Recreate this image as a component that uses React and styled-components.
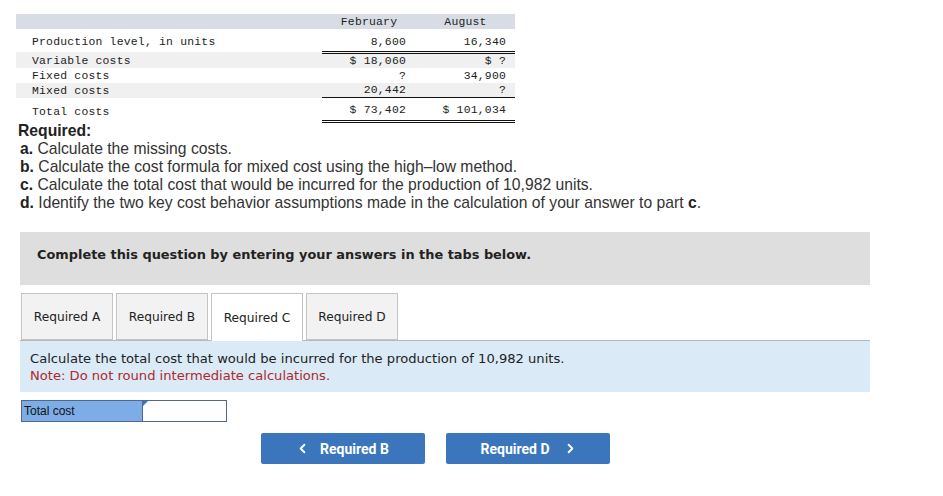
import React from "react";
import styled, { createGlobalStyle } from "styled-components";
import { ChevronLeft, ChevronRight } from "lucide-react";

const Global = createGlobalStyle`
  html, body { margin: 0; padding: 0; background: #fff; }
  body { font-family: "Liberation Sans", Arial, sans-serif; color: #222; }
`;

const Page = styled.div`
  width: 943px;
  height: 496px;
  overflow: hidden;
  padding-top: 14px;
  box-sizing: border-box;
`;

const DataTable = styled.table`
  margin-left: 16px;
  width: 499px;
  border-collapse: collapse;
  font-family: "Liberation Mono", "DejaVu Sans Mono", monospace;
  font-size: 11.4px;
  letter-spacing: 0.22px;
  color: #222;
`;

const HeadRow = styled.tr`
  background: #d8dde5;
  height: 15px;
`;

const Row = styled.tr`
  background: ${(p) => (p.$shade ? "#f0f0f0" : "#fff")};
  height: ${(p) => p.$h || 15}px;
`;

const Label = styled.td`
  padding: 0 0 ${(p) => p.$pb || 0}px 16px;
  width: 290px;
  vertical-align: bottom;
  line-height: 14px;
  white-space: nowrap;
`;

const HeadCell = styled.th`
  font-weight: normal;
  text-align: center;
  padding: 0;
  line-height: 14px;
  width: ${(p) => p.$w}px;
`;

const Num = styled.td`
  text-align: right;
  padding: 0 ${(p) => p.$pr}px ${(p) => p.$pb || 0}px 0;
  vertical-align: bottom;
  line-height: 14px;
  white-space: nowrap;
  border-bottom: ${(p) =>
    p.$line === "double" ? "3px double #111" : p.$line === "single" ? "1px solid #111" : "none"};
`;

const Required = styled.div`
  margin: -1px 0 0 18px;
  font-family: "Liberation Sans", Arial, sans-serif;
  font-size: 15.7px;
  line-height: 18px;
  color: #333;
`;

const ReqTitle = styled.div`
  font-weight: bold;
  color: #222;
`;

const ReqItem = styled.div`
  padding-left: 2px;
  b { font-weight: bold; color: #222; }
`;

const Instruction = styled.div`
  margin: 20px 0 0 20px;
  width: 850px;
  height: 53px;
  background: #dedede;
  padding: 15px 0 0 17px;
  box-sizing: border-box;
  font-family: "DejaVu Sans", Verdana, sans-serif;
  font-weight: bold;
  font-size: 12.9px;
  line-height: 16px;
  color: #222;
`;

const Tabs = styled.div`
  margin: 8px 0 0 20px;
  width: 850px;
  display: flex;
  gap: 3px;
  padding-left: 1px;
  box-sizing: border-box;
  border-bottom: 1px solid #b8b8b8;
  height: 48px;
`;

const Tab = styled.div`
  width: 92px;
  box-sizing: border-box;
  border: 1px solid #c4c4c4;
  border-bottom: ${(p) => (p.$active ? "none" : "1px solid #c4c4c4")};
  background: ${(p) => (p.$active ? "#fff" : "#f2f2f2")};
  height: ${(p) => (p.$active ? 48 : 47)}px;
  display: flex;
  align-items: center;
  justify-content: center;
  padding-top: 1px;
  font-family: "DejaVu Sans", Verdana, sans-serif;
  font-size: 12.2px;
  color: #222;
  position: relative;
  z-index: ${(p) => (p.$active ? 1 : 0)};
`;

const InfoBox = styled.div`
  margin-left: 20px;
  width: 850px;
  height: 51px;
  background: #dbeaf7;
  box-sizing: border-box;
  padding: 9px 0 0 10px;
  font-family: "DejaVu Sans", Verdana, sans-serif;
  font-size: 13.1px;
  line-height: 17px;
  color: #222;
`;

const Note = styled.div`
  color: #b0282a;
`;

const AnswerRow = styled.div`
  margin: 8px 0 0 21px;
  display: flex;
  width: 206px;
  height: 22px;
  border: 1px solid #51688a;
  box-sizing: border-box;
`;

const AnswerLabel = styled.div`
  width: 121px;
  box-sizing: border-box;
  background: #7cade6;
  border-right: 1px solid #51688a;
  display: flex;
  align-items: center;
  padding-left: 2px;
  font-family: "Liberation Sans", Arial, sans-serif;
  font-size: 12px;
  color: #111;
`;

const AnswerInput = styled.div`
  flex: 1;
  background: #fff;
  position: relative;
  &::before {
    content: "";
    position: absolute;
    left: 0;
    top: 0;
    border-left: 5px solid #3a78c0;
    border-bottom: 5px solid transparent;
  }
`;

const NavRow = styled.div`
  margin: 11px 0 0 261px;
  display: flex;
  gap: 21px;
`;

const NavButton = styled.div`
  width: 164px;
  height: 31px;
  background: #3b76bc;
  border-radius: 2px;
  display: flex;
  align-items: center;
  justify-content: center;
  gap: ${(p) => (p.$next ? 13 : 10)}px;
  color: #fff;
  font-family: Roboto, "Liberation Sans", sans-serif;
  font-weight: bold;
  font-size: 14px;
  padding-right: ${(p) => (p.$next ? 0 : 2)}px;
  padding-left: ${(p) => (p.$next ? 2 : 0)}px;
  box-sizing: border-box;
`;

export default function App() {
  return (
    <>
      <Global />
      <Page>
        <DataTable>
          <tbody>
            <HeadRow>
              <th />
              <HeadCell $w={94}>February</HeadCell>
              <HeadCell $w={99}>August</HeadCell>
            </HeadRow>
            <Row $h={23}>
              <Label $pb={3}>Production level, in units</Label>
              <Num $pr={10} $pb={2} $line="double">8,600</Num>
              <Num $pr={9} $pb={2} $line="double">16,340</Num>
            </Row>
            <Row $shade>
              <Label>Variable costs</Label>
              <Num $pr={10}>$ 18,060</Num>
              <Num $pr={9}>$ ?</Num>
            </Row>
            <Row>
              <Label>Fixed costs</Label>
              <Num $pr={10}>?</Num>
              <Num $pr={9}>34,900</Num>
            </Row>
            <Row $shade>
              <Label>Mixed costs</Label>
              <Num $pr={10} $line="single">20,442</Num>
              <Num $pr={9} $line="single">?</Num>
            </Row>
            <Row $h={24}>
              <Label $pb={3}>Total costs</Label>
              <Num $pr={10} $pb={3} $line="double">$ 73,402</Num>
              <Num $pr={9} $pb={3} $line="double">$ 101,034</Num>
            </Row>
          </tbody>
        </DataTable>

        <Required>
          <ReqTitle>Required:</ReqTitle>
          <ReqItem><b>a.</b> Calculate the missing costs.</ReqItem>
          <ReqItem><b>b.</b> Calculate the cost formula for mixed cost using the high–low method.</ReqItem>
          <ReqItem><b>c.</b> Calculate the total cost that would be incurred for the production of 10,982 units.</ReqItem>
          <ReqItem><b>d.</b> Identify the two key cost behavior assumptions made in the calculation of your answer to part <b>c</b>.</ReqItem>
        </Required>

        <Instruction>Complete this question by entering your answers in the tabs below.</Instruction>

        <Tabs>
          <Tab>Required A</Tab>
          <Tab>Required B</Tab>
          <Tab $active>Required C</Tab>
          <Tab>Required D</Tab>
        </Tabs>

        <InfoBox>
          <div>Calculate the total cost that would be incurred for the production of 10,982 units.</div>
          <Note>Note: Do not round intermediate calculations.</Note>
        </InfoBox>

        <AnswerRow>
          <AnswerLabel>Total cost</AnswerLabel>
          <AnswerInput />
        </AnswerRow>

        <NavRow>
          <NavButton>
            <ChevronLeft size={15} strokeWidth={3} />
            Required B
          </NavButton>
          <NavButton $next>
            Required D
            <ChevronRight size={15} strokeWidth={3} />
          </NavButton>
        </NavRow>
      </Page>
    </>
  );
}
